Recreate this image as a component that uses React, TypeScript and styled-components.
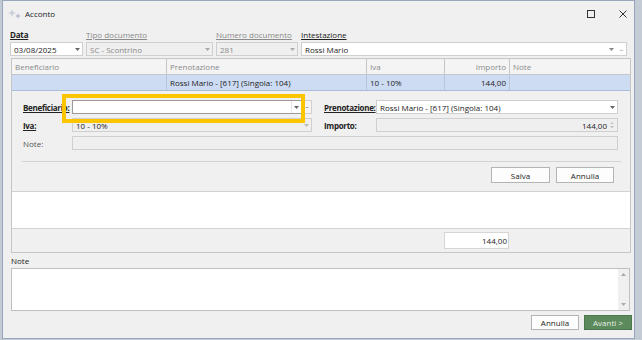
import React from 'react';
import styled, { createGlobalStyle } from 'styled-components';

const Global = createGlobalStyle`
  html, body { margin: 0; padding: 0; background: #c3cbd5; }
  body { font-family: "Open Sans", "Noto Sans", sans-serif; font-size: 8px; color: #222; }
  * { box-sizing: border-box; }
`;

const Window = styled.div`
  margin-left: 2px;
  width: 633px;
  height: 339px;
  background: #f0f0f0;
  border: 1px solid #97a8bd;
  display: flex;
  flex-direction: column;
`;

const TitleBar = styled.div`
  height: 25px;
  display: flex;
  align-items: center;
  padding: 0 7px 0 5px;
`;

const Title = styled.span`
  margin-left: 4px;
  font-size: 8px;
  color: #222;
  flex: 1;
`;

const Controls = styled.div`
  display: flex;
  align-items: center;
  gap: 24px;
`;

const Body = styled.div`
  padding: 0 3px 0 7px;
  display: flex;
  flex-direction: column;
`;

const TopRow = styled.div`
  margin-top: 3px;
  display: grid;
  grid-template-columns: 73px 127px 82px 326px;
  column-gap: 3px;
  row-gap: 1px;
`;

const Label = styled.div<{ $bold?: boolean; $disabled?: boolean; $plain?: boolean }>`
  height: 12px;
  line-height: 12px;
  font-size: 8px;
  font-weight: ${p => (p.$bold ? 700 : 400)};
  letter-spacing: ${p => (p.$bold ? '-0.2px' : '0')};
  color: ${p => (p.$disabled ? '#8a8a8a' : '#222')};
  text-decoration: ${p => (p.$plain ? 'none' : 'underline')};
  white-space: nowrap;
`;

const Field = styled.div<{ $disabled?: boolean; $focus?: boolean; $span?: boolean; $dark?: boolean }>`
  height: 14px;
  border: 1px solid ${p => (p.$focus ? '#9a9a9a' : '#cfcfcf')};
  background: ${p => (p.$disabled ? '#efefef' : '#fff')};
  color: ${p => (p.$disabled && !p.$dark ? '#8a8a8a' : '#222')};
  display: flex;
  align-items: center;
  padding-left: 3px;
  font-size: 8px;
  white-space: nowrap;
  overflow: hidden;
  flex: 1;
  grid-column: ${p => (p.$span ? '2 / 6' : 'auto')};
`;

const FieldText = styled.span<{ $right?: boolean }>`
  flex: 1;
  text-align: ${p => (p.$right ? 'right' : 'left')};
`;

const Arrow = styled.span<{ $divider?: boolean }>`
  width: 10px;
  display: flex;
  flex-direction: column;
  gap: 2px;
  justify-content: center;
  align-items: center;
  align-self: stretch;
  border-left: ${p => (p.$divider ? '1px solid #e2e2e2' : 'none')};
`;

const Dots = styled.span`
  width: 10px;
  color: #888;
  font-size: 8px;
  display: flex;
  justify-content: center;
  letter-spacing: -1px;
`;

const Grid = styled.div`
  margin-top: 2px;
  width: 620px;
  margin-left: 1px;
  border: 1px solid #c6c6c6;
  display: flex;
  flex-direction: column;
`;

const GridRow = styled.div<{ $selected?: boolean }>`
  display: grid;
  grid-template-columns: 155px 200px 78px 65px 1fr;
  height: 16px;
  background: ${p => (p.$selected ? '#cddbf3' : '#f4f4f4')};
  border-bottom: 1px solid ${p => (p.$selected ? '#a9bcd9' : '#c6c6c6')};
`;

const Cell = styled.div<{ $head?: boolean; $right?: boolean }>`
  border-right: 1px solid ${p => (p.$head ? '#c6c6c6' : '#b8c6dc')};
  padding: 0 3px;
  display: flex;
  align-items: center;
  justify-content: ${p => (p.$right ? 'flex-end' : 'flex-start')};
  color: ${p => (p.$head ? '#8a8a8a' : '#222')};
  font-size: 8px;
  white-space: nowrap;
  &:last-child { border-right: none; }
`;

const FormArea = styled.div`
  position: relative;
  height: 100px;
  padding: 9px 0 0 11px;
  background: #f0f0f0;
`;

const FormGrid = styled.div`
  display: grid;
  grid-template-columns: 49px 240px 12px 52px 242px;
  grid-template-rows: 14px 14px 14px;
  row-gap: 4px;
  align-items: center;
`;

const FormLabel = styled.div<{ $underline?: boolean; $bold?: boolean }>`
  font-size: 8px;
  font-weight: ${p => (p.$bold ? 700 : 400)};
  letter-spacing: ${p => (p.$bold ? '-0.3px' : '0')};
  text-decoration: ${p => (p.$underline ? 'underline' : 'none')};
  color: ${p => (p.$bold ? '#222' : '#555')};
  white-space: nowrap;
`;

const Combo = styled.div`
  display: flex;
  height: 14px;
`;

const DotsButton = styled.div`
  width: 10px;
  height: 14px;
  border: 1px solid #cfcfcf;
  border-left: none;
  background: #f4f4f4;
  display: flex;
  align-items: center;
  justify-content: center;
  color: #666;
  font-size: 7px;
  letter-spacing: -1px;
`;

const Highlight = styled.div`
  position: absolute;
  left: 50px;
  top: 3px;
  width: 243px;
  height: 29px;
  border: 4px solid #fbc600;
  pointer-events: none;
`;

const Separator = styled.div`
  margin: 11px 9px 0 -1px;
  height: 1px;
  background: #d2d2d2;
`;

const ButtonRow = styled.div`
  display: flex;
  justify-content: flex-end;
  gap: 6px;
  margin-top: 5px;
  padding-right: 16px;
`;

const Button = styled.div<{ $w: number; $h: number; $primary?: boolean }>`
  width: ${p => p.$w}px;
  height: ${p => p.$h}px;
  background: ${p => (p.$primary ? '#5c8a5d' : '#fdfdfd')};
  border: 1px solid ${p => (p.$primary ? '#4a7a4c' : '#b4b4b4')};
  color: ${p => (p.$primary ? '#e6f0e6' : '#222')};
  display: flex;
  align-items: center;
  justify-content: center;
  font-size: 8px;
`;

const WhiteArea = styled.div`
  height: 38px;
  background: #fff;
  border-top: 1px solid #d2d2d2;
  border-bottom: 1px solid #d2d2d2;
`;

const Footer = styled.div`
  height: 23px;
  display: flex;
  padding: 3px 0 0 432px;
`;

const TotalBox = styled.div`
  width: 65px;
  height: 17px;
  background: #fff;
  border: 1px solid #d6d6d6;
  display: flex;
  align-items: center;
  justify-content: flex-end;
  padding-right: 1px;
  font-size: 8px;
`;

const NoteLabel = styled.div`
  margin: 2px 0 0 1px;
  height: 12px;
  line-height: 12px;
  font-size: 8px;
  color: #222;
`;

const NoteBox = styled.div`
  margin: 1px 0 0 1px;
  width: 619px;
  height: 43px;
  background: #fff;
  border: 1px solid #c0c0c0;
  display: flex;
  justify-content: flex-end;
`;

const ScrollBar = styled.div`
  width: 11px;
  background: #f0f0f0;
  display: flex;
  flex-direction: column;
  justify-content: space-between;
  align-items: center;
  padding: 4px 0;
`;

const BottomButtons = styled.div`
  display: flex;
  justify-content: flex-end;
  margin-top: 4px;
  gap: 5px;
  margin-right: -1px;
`;

const Tri = ({ up, color = '#666', w = 5 }: { up?: boolean; color?: string; w?: number }) => (
  <svg width={w} height={w * 0.6} viewBox="0 0 5 3">
    <path d={up ? 'M0 3 L2.5 0 L5 3 Z' : 'M0 0 L5 0 L2.5 3 Z'} fill={color} />
  </svg>
);

const AppIcon = () => (
  <svg width="13" height="10" viewBox="0 0 13 10">
    <path d="M4 0 L5.2 3 L8 4 L5.2 5 L4 8 L2.8 5 L0 4 L2.8 3 Z" fill="#c9cfd8" />
    <path d="M10 4 L10.8 6 L13 7 L10.8 8 L10 10 L9.2 8 L7 7 L9.2 6 Z" fill="#b7c0cc" />
  </svg>
);

export default function App() {
  return (
    <>
      <Global />
      <Window>
        <TitleBar>
          <AppIcon />
          <Title>Acconto</Title>
          <Controls>
            <svg width="8" height="8" viewBox="0 0 8 8">
              <rect x="0.5" y="0.5" width="7" height="7" fill="none" stroke="#333" strokeWidth="1" />
            </svg>
            <svg width="8" height="8" viewBox="0 0 8 8">
              <path d="M0.5 0.5 L7.5 7.5 M7.5 0.5 L0.5 7.5" stroke="#333" strokeWidth="1" />
            </svg>
          </Controls>
        </TitleBar>
        <Body>
          <TopRow>
            <Label $bold>Data</Label>
            <Label $disabled>Tipo documento</Label>
            <Label $disabled>Numero documento</Label>
            <Label>Intestazione</Label>
            <Field>
              <FieldText>03/08/2025</FieldText>
              <Arrow><Tri /></Arrow>
            </Field>
            <Field $disabled>
              <FieldText>SC - Scontrino</FieldText>
              <Arrow><Tri color="#aaa" /></Arrow>
            </Field>
            <Field $disabled>
              <FieldText>281</FieldText>
              <Arrow><Tri color="#aaa" /></Arrow>
            </Field>
            <Field>
              <FieldText>Rossi Mario</FieldText>
              <Arrow><Tri color="#888" /></Arrow>
              <Dots>···</Dots>
            </Field>
          </TopRow>
          <Grid>
            <GridRow>
              <Cell $head>Beneficiario</Cell>
              <Cell $head>Prenotazione</Cell>
              <Cell $head>Iva</Cell>
              <Cell $head $right>Importo</Cell>
              <Cell $head>Note</Cell>
            </GridRow>
            <GridRow $selected>
              <Cell />
              <Cell>Rossi Mario - [617] (Singola: 104)</Cell>
              <Cell>10 - 10%</Cell>
              <Cell $right>144,00</Cell>
              <Cell />
            </GridRow>
            <FormArea>
              <FormGrid>
                <FormLabel $bold $underline>Beneficiario:</FormLabel>
                <Combo>
                  <Field $focus>
                    <FieldText />
                    <Arrow $divider><Tri /></Arrow>
                  </Field>
                  <DotsButton>···</DotsButton>
                </Combo>
                <div />
                <FormLabel $bold $underline>Prenotazione:</FormLabel>
                <Field>
                  <FieldText>Rossi Mario - [617] (Singola: 104)</FieldText>
                  <Arrow><Tri /></Arrow>
                </Field>

                <FormLabel $bold $underline>Iva:</FormLabel>
                <Field $disabled $dark>
                  <FieldText>10 - 10%</FieldText>
                  <Arrow><Tri color="#bbb" /></Arrow>
                </Field>
                <div />
                <FormLabel $bold>Importo:</FormLabel>
                <Field $disabled $dark>
                  <FieldText $right>144,00</FieldText>
                  <Arrow>
                    <Tri up color="#c0c0c0" w={4} />
                    <Tri color="#c0c0c0" w={4} />
                  </Arrow>
                </Field>

                <FormLabel>Note:</FormLabel>
                <Field $disabled $span />
              </FormGrid>
              <Highlight />
              <Separator />
              <ButtonRow>
                <Button $w={59} $h={16}>Salva</Button>
                <Button $w={58} $h={16}>Annulla</Button>
              </ButtonRow>
            </FormArea>
            <WhiteArea />
            <Footer>
              <TotalBox>144,00</TotalBox>
            </Footer>
          </Grid>
          <NoteLabel>Note</NoteLabel>
          <NoteBox>
            <ScrollBar>
              <Tri up color="#aaa" />
              <Tri color="#aaa" />
            </ScrollBar>
          </NoteBox>
          <BottomButtons>
            <Button $w={48} $h={15}>Annulla</Button>
            <Button $w={48} $h={15} $primary>Avanti &gt;</Button>
          </BottomButtons>
        </Body>
      </Window>
    </>
  );
}
